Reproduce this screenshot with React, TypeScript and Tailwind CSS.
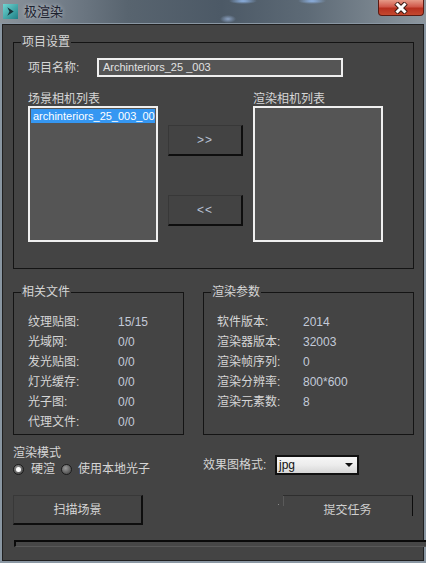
import type { ReactNode } from "react";

const font = "font-['Liberation_Sans','Noto_Sans_CJK_SC',sans-serif]";
const labelText = "text-[#d6d6d6]";
const valueText = "text-[#c3cad8]";

const relatedFiles = [
  ["纹理贴图:", "15/15"],
  ["光域网:", "0/0"],
  ["发光贴图:", "0/0"],
  ["灯光缓存:", "0/0"],
  ["光子图:", "0/0"],
  ["代理文件:", "0/0"],
];

const renderParams = [
  ["软件版本:", "2014"],
  ["渲染器版本:", "32003"],
  ["渲染帧序列:", "0"],
  ["渲染分辨率:", "800*600"],
  ["渲染元素数:", "8"],
];

function Group({
  title,
  className,
  children,
}: {
  title: string;
  className: string;
  children?: ReactNode;
}) {
  return (
    <div className={`relative border border-[#141414] ${className}`}>
      <span className="absolute left-[7px] -top-[8px] bg-[#444444] px-[1px] leading-[14px] text-[#d6d6d6]">
        {title}
      </span>
      {children}
    </div>
  );
}

function MoveButton({ label }: { label: string }) {
  return (
    <div className="h-[31px] w-[75px] flex items-center justify-center border-t border-l border-[#383838] border-r-2 border-b-2 border-r-[#0e0e0e] border-b-[#0e0e0e] bg-[#434343] text-[#b8c2d4] tracking-[1px]">
      {label}
    </div>
  );
}

function Radio({ checked }: { checked?: boolean }) {
  return (
    <span className="w-[11px] h-[11px] rounded-full border border-[#1c1c1c] bg-[radial-gradient(circle_at_40%_35%,#9a9a9a,#555_70%)] flex items-center justify-center">
      {checked && <span className="w-[5px] h-[5px] rounded-full bg-white" />}
    </span>
  );
}

function AppIcon() {
  return (
    <svg width="15" height="15" viewBox="0 0 14 14">
      <defs>
        <linearGradient id="ic" x1="0" y1="0" x2="1" y2="1">
          <stop offset="0" stopColor="#6fd6d2" />
          <stop offset="1" stopColor="#1f7f86" />
        </linearGradient>
      </defs>
      <rect x="0" y="0" width="14" height="14" fill="url(#ic)" />
      <path d="M4 3 L10 7 L4 11 L6 7 Z" fill="#17333a" />
    </svg>
  );
}

export default function App() {
  return (
    <div className={`w-[426px] h-[563px] overflow-hidden flex flex-col text-[12px] ${font}`}>
      {/* title bar */}
      <div className="relative h-[23px] shrink-0 flex items-center bg-[radial-gradient(ellipse_14px_3px_at_243px_1px,#8fb4e6,transparent),radial-gradient(ellipse_14px_3px_at_312px_1px,#8fb4e6,transparent),radial-gradient(ellipse_8px_4px_at_228px_19px,#8aa0c0,transparent),linear-gradient(90deg,#8c949b_0%,#7b8590_10%,#58646f_30%,#4c5966_52%,#5d6a76_72%,#8d979f_100%)]">
        <div className="ml-[3px]">
          <AppIcon />
        </div>
        <span className="ml-[6px] text-[13px] leading-[14px] text-[#1d2230] [text-shadow:0_0_4px_rgba(255,255,255,0.6)]">
          极渲染
        </span>
        <div className="absolute right-[2px] top-0 w-[46px] h-[16px] rounded-b-[4px] border border-t-0 border-[#5c1a12] bg-[linear-gradient(180deg,#e69a88_0%,#d0584a_45%,#b7301f_55%,#c4482f_100%)] flex items-center justify-center">
          <svg width="16" height="12" viewBox="0 0 16 12">
            <path d="M3 1 L13 11 M13 1 L3 11" stroke="#3a1a14" strokeWidth="5" />
            <path d="M3.5 1.5 L12.5 10.5 M12.5 1.5 L3.5 10.5" stroke="#ffffff" strokeWidth="3" />
          </svg>
        </div>
      </div>

      {/* window body */}
      <div className="flex-1 border-t border-x-2 border-b-2 border-[#8a97a3]">
        <div className="h-full border border-[#202020] bg-[#444444] flex flex-col">
          <Group title="项目设置" className="mt-[17px] ml-[10px] w-[401px] h-[227px]">
            <div className="mt-[15px] pl-[14px] flex items-center">
              <span className={`w-[69px] leading-[14px] ${labelText}`}>项目名称:</span>
              <div className="w-[246px] h-[19px] border-2 border-[#efefef] bg-[#555555] pl-[4px] text-[11px] leading-[15px] text-[#e2e2e2]">
                Archinteriors_25 _003
              </div>
            </div>

            <div className="mt-[16px] ml-[14px] grid grid-cols-[130px_75px_130px] gap-x-[10px]">
              <span className={`h-[13px] leading-[13px] ${labelText}`}>场景相机列表</span>
              <span />
              <span className={`h-[13px] leading-[13px] ${labelText}`}>渲染相机列表</span>

              <div className="h-[136px] border-2 border-[#f0f0f0] bg-[#555555] p-[1px] overflow-hidden">
                <div className="h-[14px] bg-[#3597f2] pl-[2px] text-[11px] leading-[14px] text-white whitespace-nowrap">
                  archinteriors_25_003_00
                </div>
              </div>
              <div className="flex flex-col pt-[19px] gap-[39px]">
                <MoveButton label=">>" />
                <MoveButton label="<<" />
              </div>
              <div className="h-[136px] border-2 border-[#f0f0f0] bg-[#555555]" />
            </div>
          </Group>

          <div className="mt-[23px] ml-[10px] flex gap-[19px]">
            <Group title="相关文件" className="w-[171px] h-[143px]">
              <div className="pt-[19px] pl-[14px]">
                {relatedFiles.map(([k, v]) => (
                  <div key={k} className="h-[20px] flex items-center">
                    <span className={`w-[90px] ${labelText}`}>{k}</span>
                    <span className={valueText}>{v}</span>
                  </div>
                ))}
              </div>
            </Group>
            <Group title="渲染参数" className="w-[211px] h-[143px]">
              <div className="pt-[19px] pl-[13px]">
                {renderParams.map(([k, v]) => (
                  <div key={k} className="h-[20px] flex items-center">
                    <span className={`w-[86px] ${labelText}`}>{k}</span>
                    <span className={valueText}>{v}</span>
                  </div>
                ))}
              </div>
            </Group>
          </div>

          <div className="mt-[11px] ml-[10px] flex items-start">
            <div className="w-[190px]">
              <div className={`leading-[14px] ${labelText}`}>渲染模式</div>
              <div className="mt-[2px] h-[14px] flex items-center">
                <Radio checked />
                <span className={`ml-[7px] ${labelText}`}>硬渲</span>
                <span className="ml-[6px]">
                  <Radio />
                </span>
                <span className={`ml-[6px] ${labelText}`}>使用本地光子</span>
              </div>
            </div>
            <div className="mt-[9px] flex items-center">
              <span className={`w-[72px] ${labelText}`}>效果图格式:</span>
              <div className="w-[84px] h-[20px] border-2 border-[#111111] bg-[linear-gradient(180deg,#f6f6f6_0%,#ececec_50%,#d6d6d6_100%)] flex items-center pl-[2px] pr-[4px]">
                <span className="flex-1 text-[#111] leading-[14px]">jpg</span>
                <svg width="8" height="4" viewBox="0 0 8 4">
                  <path d="M0 0 H8 L4 4 Z" fill="#111" />
                </svg>
              </div>
            </div>
          </div>

          <div className="mt-[19px] ml-[10px] flex items-start">
            <div className={`w-[130px] h-[30px] flex items-center justify-center border-t border-l border-[#383838] border-r-2 border-b-2 border-r-[#0e0e0e] border-b-[#0e0e0e] bg-[#444444] ${labelText}`}>
              扫描场景
            </div>
            <span className="ml-[135px] mt-[9px] w-[1px] h-[1px] bg-[#8a8a8a]" />
            <div className="ml-[4px] w-[130px] h-[21px] border-t border-[#2e2e2e] border-r border-r-[#0c0c0c] relative">
              <div className="w-[1px] h-[10px] bg-[#5a5a5a]" />
              <div className="absolute inset-x-0 top-[8px] h-[12px] overflow-hidden text-center leading-[12px] text-[#cfcfcf]">
                提交任务
              </div>
            </div>
          </div>

          <div className="mt-[15px] ml-[11px] -mr-[3px] h-[7px] border-t-2 border-l-2 border-[#0a0a0a] border-b border-b-[#595959] bg-[#474747]" />
        </div>
      </div>
    </div>
  );
}
